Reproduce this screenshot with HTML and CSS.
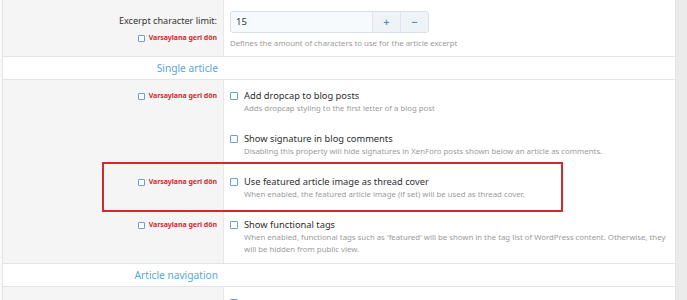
FILE: index.html
```html
<!DOCTYPE html>
<html lang="en">
<head>
<meta charset="utf-8">
<title>Options</title>
<link rel="stylesheet" href="styles.css">
</head>
<body>
<div class="edge"></div>
<div class="block">
  <div class="row row-first">
    <div class="label-col">
      <div class="label">Excerpt character limit:</div>
      <div class="revert"><span class="cb cb-small"></span><span class="revert-text">Varsaylana geri dön</span></div>
    </div>
    <div class="content-col">
      <div class="spinbox">
        <div class="spin-input">15</div>
        <div class="spin-btn">+</div>
        <div class="spin-btn">−</div>
      </div>
      <div class="desc desc-flat">Defines the amount of characters to use for the article excerpt</div>
    </div>
  </div>

  <div class="header"><div class="header-text">Single article</div></div>

  <div class="row opt">
    <div class="label-col">
      <div class="revert"><span class="cb cb-small"></span><span class="revert-text">Varsaylana geri dön</span></div>
    </div>
    <div class="content-col">
      <div class="title"><span class="cb"></span>Add dropcap to blog posts</div>
      <div class="desc">Adds dropcap styling to the first letter of a blog post</div>
    </div>
  </div>

  <div class="row opt">
    <div class="label-col"></div>
    <div class="content-col">
      <div class="title"><span class="cb"></span>Show signature in blog comments</div>
      <div class="desc">Disabling this property will hide signatures in XenForo posts shown below an article as comments.</div>
    </div>
  </div>

  <div class="row opt highlight">
    <div class="label-col">
      <div class="revert"><span class="cb cb-small"></span><span class="revert-text">Varsaylana geri dön</span></div>
    </div>
    <div class="content-col">
      <div class="title"><span class="cb"></span>Use featured article image as thread cover</div>
      <div class="desc">When enabled, the featured article image (if set) will be used as thread cover.</div>
    </div>
    <div class="redbox"></div>
  </div>

  <div class="row opt opt-last">
    <div class="label-col">
      <div class="revert"><span class="cb cb-small"></span><span class="revert-text">Varsaylana geri dön</span></div>
    </div>
    <div class="content-col">
      <div class="title"><span class="cb"></span>Show functional tags</div>
      <div class="desc">When enabled, functional tags such as 'featured' will be shown in the tag list of WordPress content. Otherwise, they will be hidden from public view.</div>
    </div>
  </div>

  <div class="header"><div class="header-text">Article navigation</div></div>

  <div class="row opt">
    <div class="label-col"></div>
    <div class="content-col">
      <div class="title"><span class="cb"></span></div>
    </div>
  </div>
</div>
<div class="gutter"></div>
</body>
</html>
```
FILE: styles.css
```css
html, body {
  margin: 0;
  padding: 0;
  height: 300px;
  overflow: hidden;
}
body {
  display: grid;
  grid-template-columns: 2px 674px 1fr;
  background: #ebebeb;
  font-family: "Noto Sans", "Open Sans", sans-serif;
  color: #2e2e2e;
}
.edge {
  background: #fafafa;
}
.gutter {
  background: #ebebeb;
}
.block {
  background: #fff;
  border-left: 1px solid #e2e2e2;
  border-right: 1px solid #e6e6e6;
  height: 300px;
  overflow: hidden;
}
.row {
  display: grid;
  grid-template-columns: 221px 1fr;
  position: relative;
}
.label-col {
  background: #f5f5f5;
  border-right: 1px solid #e8e8e8;
  text-align: right;
  padding-right: 6px;
}
.content-col {
  padding-left: 6px;
  padding-right: 2px;
}
.row-first {
  border-bottom: 1px solid #e4e4e4;
}
.row-first .label-col {
  padding-top: 14px;
}
.row-first .content-col {
  padding-top: 11px;
  padding-bottom: 7px;
}
.label {
  font-size: 9.1px;
  line-height: 13px;
  height: 13px;
  color: #333;
}
.row-first .revert {
  margin-top: 5px;
}
.revert {
  display: flex;
  justify-content: flex-end;
  align-items: center;
  gap: 4px;
  height: 12px;
}
.revert-text {
  color: #d22a2f;
  font-weight: 700;
  font-size: 7px;
  line-height: 12px;
  letter-spacing: -0.05px;
}
.cb {
  display: inline-block;
  width: 8px;
  height: 8px;
  border: 1px solid #6d9fd1;
  border-radius: 1px;
  background: #fbfdff;
  box-sizing: border-box;
  flex: none;
}
.cb-small {
  width: 7px;
  height: 7px;
}
.spinbox {
  display: flex;
  width: 199px;
  height: 22px;
  border: 1px solid #d9e0e8;
  border-radius: 3px;
  box-sizing: border-box;
  background: #f7fafd;
  overflow: hidden;
}
.spin-input {
  flex: 1;
  font-size: 9.5px;
  line-height: 20px;
  padding-left: 5px;
  color: #333;
}
.spin-btn {
  width: 27px;
  border-left: 1px solid #dfe5ec;
  background: #eef3f8;
  color: #4b8ed0;
  text-align: center;
  font-size: 11px;
  line-height: 20px;
  font-weight: 600;
}
.desc {
  font-size: 7.8px;
  line-height: 12px;
  color: #9b9b9b;
  padding-left: 14px;
}
.desc-flat {
  padding-left: 0;
  margin-top: 4px;
}
.header {
  border-bottom: 1px solid #e4e4e4;
  height: 22px;
  display: grid;
  grid-template-columns: 221px 1fr;
}
.header-text {
  text-align: right;
  padding-right: 6px;
  font-size: 10.2px;
  line-height: 23px;
  color: #5aa6da;
}
.opt .content-col {
  padding-top: 9px;
  padding-bottom: 9px;
}
.opt .label-col {
  padding-top: 10px;
}
.opt-last {
  border-bottom: 1px solid #e4e4e4;
}
.opt-last .content-col {
  padding-bottom: 8px;
}
.title {
  display: flex;
  align-items: center;
  gap: 6px;
  font-size: 9.3px;
  line-height: 13px;
  height: 13px;
  color: #2e2e2e;
}
.redbox {
  position: absolute;
  z-index: 2;
  left: 99px;
  top: -4px;
  width: 461px;
  height: 50px;
  border: 2px solid #d3282e;
  box-sizing: border-box;
  pointer-events: none;
}
```
